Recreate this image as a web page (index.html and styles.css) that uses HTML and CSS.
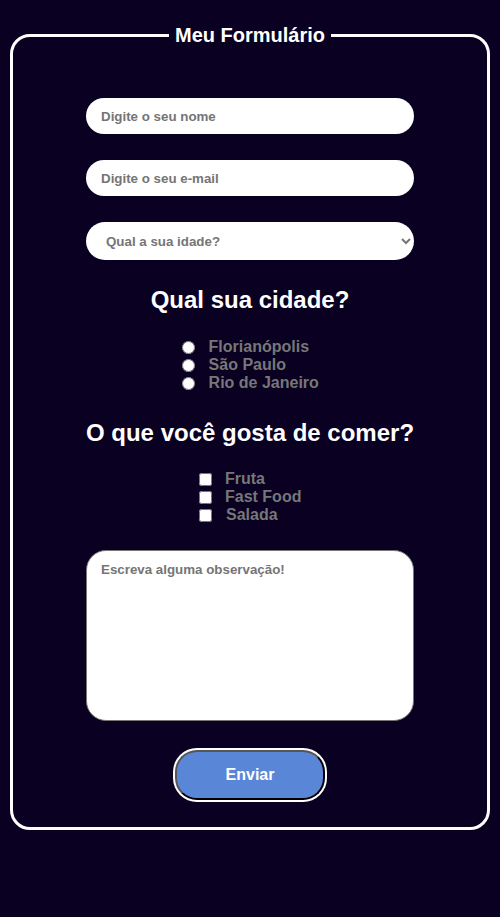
FILE: index.html
```html
<!DOCTYPE html>
<html lang="pt-BR">
<head>
<meta charset="utf-8">
<title>Meu Formulário</title>
<link rel="stylesheet" href="styles.css">
</head>
<body>
<form class="form">
  <fieldset class="box">
    <legend class="title">Meu Formulário</legend>
    <div class="content">
      <input class="field" type="text" placeholder="Digite o seu nome">
      <input class="field field-gap" type="email" placeholder="Digite o seu e-mail">
      <select class="select field-gap">
        <option>Qual a sua idade?</option>
      </select>
      <h2 class="heading">Qual sua cidade?</h2>
      <div class="group group-radio">
        <label class="opt"><input class="radio" type="radio" name="cidade"> Florianópolis</label>
        <label class="opt"><input class="radio" type="radio" name="cidade"> São Paulo</label>
        <label class="opt"><input class="radio" type="radio" name="cidade"> Rio de Janeiro</label>
      </div>
      <h2 class="heading heading-2">O que você gosta de comer?</h2>
      <div class="group">
        <label class="opt"><input class="check" type="checkbox"> Fruta</label>
        <label class="opt"><input class="check" type="checkbox"> Fast Food</label>
        <label class="opt"><input class="check check-shift" type="checkbox"> Salada</label>
      </div>
      <textarea class="notes" placeholder="Escreva alguma observação!"></textarea>
      <button class="send" type="button">Enviar</button>
    </div>
  </fieldset>
</form>
</body>
</html>
```
FILE: styles.css
```css
html, body {
  background: #090022;
}
body {
  margin: 8px;
  font-family: "Liberation Sans", Arial, sans-serif;
  height: 901px;
}
.form {
  margin: 0;
}
.box {
  margin: 16px 2px 0;
  border: 3px solid #ffffff;
  border-radius: 20px;
  padding: 0 0 27px;
  min-width: 0;
}
.title {
  margin: 0 auto;
  padding: 0 6px;
  color: #ffffff;
  font-weight: bold;
  font-size: 20px;
  line-height: 23px;
}
.content {
  display: flex;
  flex-direction: column;
  align-items: center;
  padding-top: 51px;
}
.field {
  box-sizing: border-box;
  width: 328px;
  height: 36px;
  border: none;
  border-radius: 18px;
  padding: 0 15px;
  margin: 0;
  background: #ffffff;
  font-family: "Liberation Sans", Arial, sans-serif;
  font-weight: bold;
  font-size: 13.333px;
  outline: none;
}
.field::placeholder {
  color: #757575;
}
.field-gap {
  margin-top: 26px;
}
.select {
  box-sizing: border-box;
  width: 328px;
  height: 38px;
  border: none;
  border-radius: 19px;
  padding: 0 8px 0 16px;
  background: #ffffff;
  color: #757575;
  font-family: "Liberation Sans", Arial, sans-serif;
  font-weight: bold;
  font-size: 13.333px;
}
.heading {
  margin: 26px 0 0;
  color: #ffffff;
  font-size: 24px;
  line-height: 28px;
  font-weight: bold;
  text-align: center;
}
.heading-2 {
  margin-top: 27px;
}
.group {
  margin-top: 23px;
  display: flex;
  flex-direction: column;
}
.group-radio {
  margin-top: 24px;
}
.opt {
  display: flex;
  align-items: center;
  height: 18px;
  color: #777777;
  font-weight: bold;
  font-size: 16px;
  white-space: pre;
}
.radio {
  width: 13px;
  height: 13px;
  margin: 0 9px 0 1px;
  accent-color: #ffffff;
}
.check {
  width: 13px;
  height: 13px;
  margin: 0 9px 0 0;
}
.check-shift {
  margin-right: 10px;
}
.notes {
  box-sizing: border-box;
  margin-top: 26px;
  width: 328px;
  height: 171px;
  border: 1px solid #767676;
  border-radius: 20px;
  padding: 11px 14px;
  background: #ffffff;
  font-family: "Liberation Sans", Arial, sans-serif;
  font-weight: bold;
  font-size: 13.333px;
  resize: none;
  outline: none;
}
.notes::placeholder {
  color: #757575;
}
.send {
  box-sizing: border-box;
  margin-top: 29px;
  width: 150px;
  height: 50px;
  border-width: 2px;
  border-style: solid;
  border-color: #555555 #000000 #000000 #555555;
  border-radius: 22px;
  box-shadow: 0 0 0 2px #ffffff;
  background: #5a86d8;
  color: #ffffff;
  font-family: "Liberation Sans", Arial, sans-serif;
  font-weight: bold;
  font-size: 16px;
}
```
